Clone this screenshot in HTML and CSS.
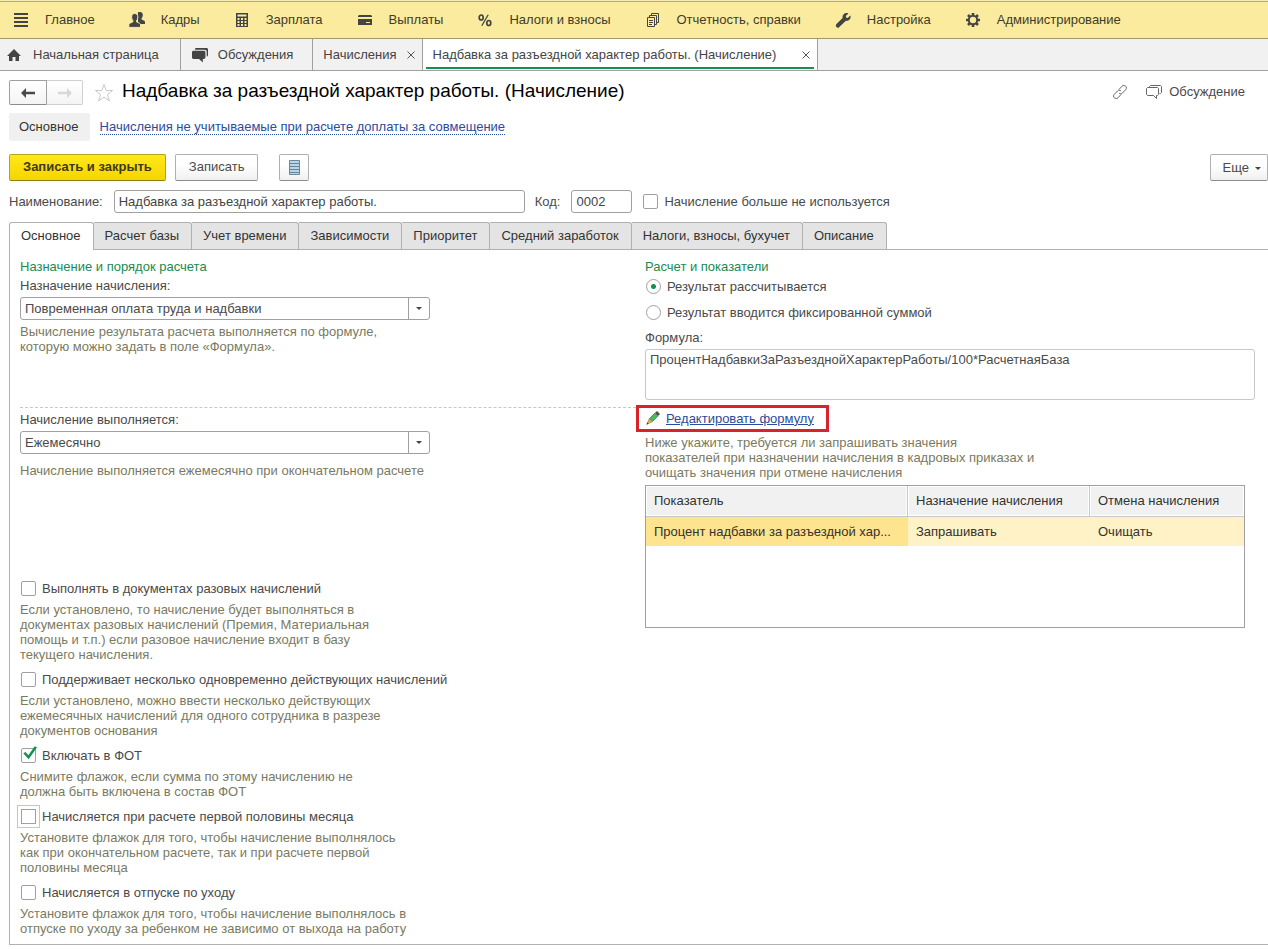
FILE: index.html
```html
<!DOCTYPE html>
<html lang="ru">
<head>
<meta charset="utf-8">
<meta name="viewport" content="width=device-width, initial-scale=1">
<title>Надбавка за разъездной характер работы. (Начисление)</title>
<link rel="stylesheet" href="styles.css">
</head>
<body>
<nav class="sections" aria-label="Разделы">
  <a class="section" href="#"><svg class="icon" viewBox="0 0 16 16"><path d="M1 1h14v2H1zM1 5h14v2H1zM1 9h14v2H1zM1 13h14v2H1z"/></svg>Главное</a>
  <a class="section" href="#"><svg class="icon" viewBox="0 0 16 16"><path d="M11 0c1.800 0 2.800 1.200 2.800 2.900 0 1.300-.4 2.400-1.200 3.100v1.500l2.600 1.300c.5.200.8.700.8 1.300V12H9V0z"/><path class="front" d="M5.800 1.500c2 0 3.100 1.500 3.100 3.500 0 1.500-.5 2.800-1.400 3.600v1.200l2.900 1.400c.7.300 1.100.8 1.100 1.600V15.400H-.2v-2.600c0-.8.4-1.300 1.100-1.600l3-1.400V8.600C3 7.800 2.600 6.500 2.600 5c0-2 1.200-3.500 3.200-3.500z"/></svg>Кадры</a>
  <a class="section" href="#"><svg class="icon" viewBox="0 0 16 16"><path fill-rule="evenodd" d="M2 1h12v14H2zM3.500 2.500v2h9v-2zM3.500 6v2h2V6zM7 6v2h2V6zM10.500 6v2h2V6zM3.500 9v2h2V9zM7 9v2h2V9zM10.500 9v2h2V9zM3.500 12v2h2v-2zM7 12v2h2v-2zM10.500 12v2h2v-2z"/></svg>Зарплата</a>
  <a class="section" href="#"><svg class="icon" viewBox="0 0 16 16"><path d="M2 3h12l1 1v1H1V4zM1 7h14v6H1zm8 3v1h4v-1z" fill-rule="evenodd"/></svg>Выплаты</a>
  <a class="section" href="#"><svg class="icon" viewBox="0 0 16 16"><g fill="none" stroke="currentColor" stroke-width="1.700"><ellipse cx="4.200" cy="5.500" rx="2" ry="2.500"/><ellipse cx="11.800" cy="11" rx="2" ry="2.500"/><path d="M11.200 2.700L4.800 13.800" stroke-width="1.300"/></g></svg>Налоги и взносы</a>
  <a class="section" href="#"><svg class="icon" viewBox="0 0 16 16"><g fill="none" stroke="currentColor"><path d="M2.500 5.500h7v9h-7zM4.500 5.500v-2h7v9h-2M6.500 3.500v-2h7v9h-2M4 8.500h4M4 10.500h4M4 12.500h3"/></g></svg>Отчетность, справки</a>
  <a class="section" href="#"><svg class="icon" viewBox="0 0 16 16"><path d="M11.500 1c.8 0 1.300.1 1.900.4L10.800 4l.4 1.500 1.500.4 2.600-2.500c.3.700.4 1.200.3 1.900-.2 2.400-2.300 4-4.700 3.500L4.300 14.900a1.900 1.900 0 0 1-2.900.1c-.8-.8-.8-2.100.1-2.900L7.600 6C7 3.300 9 1 11.500 1z"/></svg>Настройка</a>
  <a class="section" href="#"><svg class="icon" viewBox="0 0 16 16"><g fill="none" stroke="currentColor"><circle cx="8" cy="8" r="4.200" stroke-width="2"/><path stroke-width="2.600" d="M8 1v2.500M8 12.500V15M1 8h2.500M12.500 8H15M3 3l1.800 1.800M11.200 11.200L13 13M3 13l1.800-1.800M11.200 4.800L13 3"/></g></svg>Администрирование</a>
</nav>

<nav class="windows" aria-label="Открытые окна">
  <a class="window window-home" href="#"><svg class="icon" viewBox="0 0 16 16"><path d="M8 2l7 7h-2v5H9.500v-4h-3v4H3V9H1z"/></svg>Начальная страница</a>
  <a class="window window-talk" href="#"><svg class="icon icon-talk" viewBox="0 0 18 16"><path d="M5 1h10.500c.9 0 1.500.6 1.500 1.500V8c0 .9-.5 1.500-1.300 1.500V5c0-1.400-.8-2.300-2.200-2.300H4C4 1.600 4.300 1 5 1z"/><path d="M2.500 3.700h10.300c1 0 1.600.6 1.600 1.600v5c0 1-.6 1.600-1.600 1.600h-1v3.500L8 11.900H2.500c-1 0-1.500-.6-1.500-1.600v-5c0-1 .5-1.600 1.500-1.600z"/></svg>Обсуждения</a>
  <div class="window window-list"><a href="#">Начисления</a><button class="close" type="button" aria-label="Закрыть"><svg viewBox="0 0 8 8"><path d="M0.500 0.500l7 7M7.500 0.500l-7 7"/></svg></button></div>
  <div class="window window-active"><a href="#">Надбавка за разъездной характер работы. (Начисление)</a><button class="close" type="button" aria-label="Закрыть"><svg viewBox="0 0 8 8"><path d="M0.500 0.500l7 7M7.500 0.500l-7 7"/></svg></button></div>
</nav>

<main class="form">
  <header class="title-row">
    <div class="history">
      <button type="button" aria-label="Назад"><svg viewBox="0 0 14 10"><path d="M0 5l5-5v3.800h9v2.400H5V10z"/></svg></button>
      <button type="button" aria-label="Вперед" disabled><svg viewBox="0 0 14 10"><path d="M14 5L9 0v3.800H0v2.400h9V10z"/></svg></button>
    </div>
    <button class="star" type="button" aria-label="Избранное"><svg viewBox="0 0 20 20"><path d="M10 1.500l2.200 6h6.300l-5 4 1.900 6.500-5.400-3.900L4.600 18l1.900-6.500-5-4h6.300z"/></svg></button>
    <h1>Надбавка за разъездной характер работы. (Начисление)</h1>
    <button class="plain link-button" type="button" aria-label="Ссылка"><svg class="line-icon" viewBox="0 0 16 16"><path d="M7 5.500l3-3.300c1-1 2.600-1 3.700 0s1 2.500 0 3.500L10.500 9C9.600 10 8 10 7 9M9 10.500l-3 3.300c-1 1-2.600 1-3.700 0s-1-2.500 0-3.500L5.500 7C6.400 6 8 6 9 7"/></svg></button>
    <button class="plain" type="button"><svg class="line-icon" viewBox="0 0 16 16"><path d="M3.500 3.500v-1l1-1h10l1 1v6l-1 1h-1M1.500 3.500h10l1 1v6l-1 1h-1v3l-3-3h-6l-1-1v-6z"/></svg>Обсуждение</button>
  </header>

  <nav class="subnav" aria-label="Навигация формы">
    <span class="subnav-current">Основное</span>
    <a href="#">Начисления не учитываемые при расчете доплаты за совмещение</a>
  </nav>

  <div class="commands">
    <button class="btn btn-primary" type="button">Записать и закрыть</button>
    <button class="btn" type="button">Записать</button>
    <button class="btn btn-list" type="button" aria-label="Список"><svg viewBox="0 0 11 15"><path class="sheet" d="M.5.500h10v14H.5z"/><path class="rows" d="M1 3.500h9M1 6.500h9M1 9.500h9M1 12.500h9"/></svg></button>
    <button class="btn btn-more" type="button">Еще<span class="caret"></span></button>
  </div>

  <div class="fields">
    <label for="name">Наименование:</label>
    <input class="text name" id="name" type="text" value="Надбавка за разъездной характер работы.">
    <label class="code-label" for="code">Код:</label>
    <input class="text code" id="code" type="text" value="0002">
    <label class="check"><input type="checkbox">Начисление больше не используется</label>
  </div>

  <div class="tabs" role="tablist">
    <button class="tab tab-active" type="button" role="tab" aria-selected="true">Основное</button>
    <button class="tab" type="button" role="tab">Расчет базы</button>
    <button class="tab" type="button" role="tab">Учет времени</button>
    <button class="tab" type="button" role="tab">Зависимости</button>
    <button class="tab" type="button" role="tab">Приоритет</button>
    <button class="tab" type="button" role="tab">Средний заработок</button>
    <button class="tab" type="button" role="tab">Налоги, взносы, бухучет</button>
    <button class="tab" type="button" role="tab">Описание</button>
  </div>

  <div class="panel" role="tabpanel">
    <section class="left">
      <div class="purpose">
        <h2>Назначение и порядок расчета</h2>
        <label for="purpose">Назначение начисления:</label>
        <div class="select"><select id="purpose"><option>Повременная оплата труда и надбавки</option></select></div>
        <p class="hint">Вычисление результата расчета выполняется по формуле,<br>которую можно задать в поле «Формула».</p>
      </div>
      <div class="schedule">
        <label for="period">Начисление выполняется:</label>
        <div class="select"><select id="period"><option>Ежемесячно</option></select></div>
        <p class="hint">Начисление выполняется ежемесячно при окончательном расчете</p>
      </div>
      <div class="options">
        <div class="option">
          <label class="check"><input type="checkbox">Выполнять в документах разовых начислений</label>
          <p class="hint">Если установлено, то начисление будет выполняться в<br>документах разовых начислений (Премия, Материальная<br>помощь и т.п.) если разовое начисление входит в базу<br>текущего начисления.</p>
        </div>
        <div class="option">
          <label class="check"><input type="checkbox">Поддерживает несколько одновременно действующих начислений</label>
          <p class="hint">Если установлено, можно ввести несколько действующих<br>ежемесячных начислений для одного сотрудника в разрезе<br>документов основания</p>
        </div>
        <div class="option">
          <label class="check"><input type="checkbox" checked>Включать в ФОТ</label>
          <p class="hint">Снимите флажок, если сумма по этому начислению не<br>должна быть включена в состав ФОТ</p>
        </div>
        <div class="option">
          <label class="check"><input class="focused" type="checkbox">Начисляется при расчете первой половины месяца</label>
          <p class="hint">Установите флажок для того, чтобы начисление выполнялось<br>как при окончательном расчете, так и при расчете первой<br>половины месяца</p>
        </div>
        <div class="option">
          <label class="check"><input type="checkbox">Начисляется в отпуске по уходу</label>
          <p class="hint">Установите флажок для того, чтобы начисление выполнялось в<br>отпуске по уходу за ребенком не зависимо от выхода на работу</p>
        </div>
      </div>
    </section>

    <section class="right">
      <h2>Расчет и показатели</h2>
      <div class="radios">
        <label class="radio"><input type="radio" name="result" checked>Результат рассчитывается</label>
        <label class="radio"><input type="radio" name="result">Результат вводится фиксированной суммой</label>
      </div>
      <label for="formula">Формула:</label>
      <textarea id="formula" readonly>ПроцентНадбавкиЗаРазъезднойХарактерРаботы/100*РасчетнаяБаза</textarea>
      <div class="edit"><svg viewBox="0 0 14 14"><path fill="#4b4f54" d="M9 2L11 0l3 3-2 2z"/><path fill="#4cb860" stroke="#397a45" stroke-width=".7" d="M3.500 7.500L9 2l3 3-5.500 5.500z"/><path fill="#e2b15e" stroke="#8b6d3a" stroke-width=".6" d="M3.300 7.700l3 3L.8 13.300z"/><path fill="#333" d="M1.500 11.600l1.100 1.100-2.100.9z"/></svg><a href="#">Редактировать формулу</a></div>
      <p class="hint">Ниже укажите, требуется ли запрашивать значения<br>показателей при назначении начисления в кадровых приказах и<br>очищать значения при отмене начисления</p>
      <div class="grid">
        <table>
          <colgroup><col class="col-name"><col class="col-set"><col></colgroup>
          <thead><tr><th>Показатель</th><th>Назначение начисления</th><th>Отмена начисления</th></tr></thead>
          <tbody><tr><td class="cell-current">Процент надбавки за разъездной хар...</td><td>Запрашивать</td><td>Очищать</td></tr></tbody>
        </table>
      </div>
    </section>
  </div>
</main>
</body>
</html>
```
FILE: styles.css
```css
* { box-sizing: border-box; }

body {
  margin: 0;
  background: #fff;
  color: #4a4a4a;
  font: 13px/15px "Liberation Sans", Arial, sans-serif;
}

button, input, select, textarea { font: inherit; color: inherit; margin: 0; }
h1, h2, p { margin: 0; font-weight: normal; font-size: inherit; }
svg { display: block; flex: none; fill: currentColor; }

/* Section bar */
.sections {
  display: flex;
  gap: 34px;
  height: 39px;
  margin: 0;
  padding: 0 13px;
  background: #faeb9e;
  border-top: 1px solid #f6ecb4;
  border-bottom: 1px solid #a3986a;
  box-shadow: inset 0 1px #b5a96c;
}
.section {
  display: flex;
  align-items: center;
  gap: 16px;
  color: #3f3c2c;
  text-decoration: none;
  white-space: nowrap;
}
.icon { width: 16px; height: 16px; color: #444; }
.icon-talk { width: 18px; }
.front { stroke: #faeb9e; stroke-width: 1; }

/* Open windows */
.windows {
  display: flex;
  height: 32px;
  background: #f1f1f1;
  border-bottom: 1px solid #a0a0a0;
}
.window {
  display: flex;
  align-items: center;
  gap: 9px;
  padding: 0 7px 0 10px;
  border-right: 1px solid #a0a0a0;
  color: #444;
  white-space: nowrap;
  text-decoration: none;
}
.window a { color: inherit; text-decoration: none; }
.window-home { gap: 11px; padding: 0 21px 0 6px; }
.window-talk { gap: 9px; padding-right: 19px; }
.window-list { gap: 10px; }
.window-active {
  gap: 26px;
  background: linear-gradient(#149350, #149350) 3px 28px / calc(100% - 6px) 2px no-repeat #fff;
}
.close { display: flex; padding: 0; border: 0; background: none; }
.close svg { width: 8px; height: 8px; fill: none; stroke: #555; }

/* Title */
.form { padding: 9px 0 4px 9px; }
.title-row { display: flex; align-items: center; height: 25px; padding-right: 23px; }
.history { display: flex; }
.history button {
  display: flex;
  align-items: center;
  justify-content: center;
  width: 38px;
  height: 25px;
  padding: 0;
  border: 1px solid #a0a0a0;
  border-bottom-color: #8c8c8c;
  border-radius: 2px 0 0 2px;
  background: linear-gradient(#fff, #f4f4f4);
}
.history button:disabled { width: 36px; border-color: #d0d0d0; border-left: 0; border-radius: 0 2px 2px 0; color: #d8d8d8; }
.history svg { width: 14px; height: 10px; }
.star { margin-left: 11px; padding: 0; border: 0; background: none; }
.star svg { width: 20px; height: 20px; fill: none; stroke: #c8c8c8; }
h1 { flex: 1; margin-left: 8px; padding-bottom: 3px; color: #000; font-size: 19px; line-height: 22px; white-space: nowrap; }
.plain { display: flex; align-items: center; gap: 7px; padding: 0 0 2px; border: 0; background: none; }
.link-button { margin-right: 18px; }
.line-icon { width: 16px; height: 16px; fill: none; stroke: #666; }

.subnav { display: flex; align-items: center; gap: 10px; height: 28px; margin-top: 8px; }
.subnav-current { padding: 6px 11px 7px 10px; background: #f0f0f0; border-radius: 2px; color: #333; }
.subnav a { color: #2b4c9b; text-decoration: none; border-bottom: 1px dotted #2b4c9b; }

/* Commands */
.commands { display: flex; gap: 9px; margin-top: 13px; }
.btn {
  height: 27px;
  padding: 0 13px 2px;
  border: 1px solid #b0b0b0;
  border-bottom-color: #8c8c8c;
  border-radius: 2px;
  background: linear-gradient(#fff 40%, #f0f0f0);
  white-space: nowrap;
}
.btn-primary {
  border-color: #b8a020;
  border-bottom-color: #90801c;
  background: linear-gradient(#ffe81a, #f6d500);
  color: #3f3a14;
  font-weight: bold;
}
.btn-list { display: flex; align-items: center; justify-content: center; width: 30px; margin-left: 12px; padding: 0; }
.btn-list svg { width: 11px; height: 15px; }
.sheet { fill: #b9d4e6; stroke: #6c8698; }
.rows { stroke: #64859c; }
.btn-more { display: flex; align-items: center; gap: 6px; margin-left: auto; padding: 0 6px 1px 12px; }
.caret { border: 3px solid transparent; border-top-color: #444; border-bottom: 0; margin-top: 3px; }

/* Header fields */
.fields { display: flex; align-items: center; margin-top: 9px; }
.text { height: 23px; padding: 0 4px; border: 1px solid #a0a0a0; border-radius: 3px; background: #fff; color: #444; }
.name { width: 411px; margin: 0 10px 0 11px; }
.code { width: 61px; margin: 0 11px 0 11px; }

.check, .radio { display: flex; align-items: center; gap: 6px; white-space: nowrap; }
.check input, .radio input {
  appearance: none;
  width: 15px;
  height: 15px;
  border: 1px solid #a0a0a0;
  border-radius: 2px;
  background: #fff;
}
.check input:checked { position: relative; }
.check input:checked::after {
  content: "";
  position: absolute;
  left: 1px;
  top: -3px;
  width: 14px;
  height: 14px;
  background: #129150;
  clip-path: polygon(2% 52%, 18% 42%, 38% 66%, 84% 2%, 100% 10%, 40% 94%);
}
.check .focused { border-radius: 0; outline: 1px solid #e3cf4b; outline-offset: 3px; }
.radio { gap: 7px; }
.radio input { border-radius: 50%; }
.radio input:checked { background: radial-gradient(circle, #129150 2px, #fff 3px); }

/* Page tabs */
.tabs { display: flex; margin-top: 9px; }
.tab {
  height: 27px;
  padding: 0 12px 1px 11px;
  border: 1px solid #b0b0b0;
  border-width: 1px 1px 0 0;
  border-radius: 0 3px 0 0;
  background: #e4e4e4;
  color: #333;
  white-space: nowrap;
}
.tab-active { height: 28px; margin-bottom: -1px; padding-bottom: 2px; border-left-width: 1px; border-radius: 3px 3px 0 0; background: #fff; z-index: 1; }

.panel {
  display: grid;
  grid-template-columns: 616px minmax(0, 1fr);
  gap: 9px;
  padding: 9px 13px 8px 10px;
  border: 1px solid #b0b0b0;
  border-right: 0;
}
h2 { color: #1a8a4e; }
.hint { color: #7a7a62; white-space: nowrap; }
.purpose, .schedule { display: flex; flex-direction: column; gap: 4px; }
.purpose { height: 148px; }
.schedule { height: 174px; padding-top: 4px; border-top: 1px dashed #c8c8c8; }
.schedule .hint { margin-top: 5px; }
.select { position: relative; width: 410px; }
.select select {
  display: block;
  appearance: none;
  width: 100%;
  height: 23px;
  padding: 0 26px 0 4px;
  border: 1px solid #a0a0a0;
  border-radius: 3px;
  background: linear-gradient(#a0a0a0, #a0a0a0) right 20px top / 1px 100% no-repeat #fff;
}
.select::after {
  content: "";
  position: absolute;
  right: 8px;
  top: 10px;
  border: 3px solid transparent;
  border-top-color: #444;
  border-bottom: 0;
}
.options { display: flex; flex-direction: column; gap: 10px; }
.option { display: flex; flex-direction: column; align-items: flex-start; gap: 6px; }
.left .check { height: 15px; padding-left: 1px; }

.right { display: flex; flex-direction: column; align-items: flex-start; }
.radios { display: flex; flex-direction: column; gap: 11px; margin: 5px 0 10px; }
.radio input { margin-left: 1px; }
.radio { gap: 6px; }
textarea {
  display: block;
  width: 100%;
  height: 51px;
  margin-top: 4px;
  padding: 2px 4px;
  border: 1px solid #c8c8c8;
  border-radius: 3px;
  resize: none;
}
.edit {
  display: flex;
  align-items: center;
  gap: 6px;
  height: 27px;
  margin: 5px 0 3px -9px;
  padding: 0 12px 1px 7px;
  border: 3px solid #d8232a;
}
.edit svg { width: 14px; height: 14px; }
.edit a { color: #2b4c9b; }

.grid { width: 100%; max-width: 600px; height: 143px; margin-top: 5px; border: 1px solid #a0a0a0; }
table { width: 100%; table-layout: fixed; border-collapse: separate; border-spacing: 0; color: #333; }
.col-name { width: 262px; }
.col-set { width: 182px; }
th, td { padding: 0 8px; overflow: hidden; font-weight: normal; text-align: left; text-overflow: ellipsis; white-space: nowrap; }
th { height: 31px; padding-bottom: 1px; background: #f1f1f1; border-right: 1px solid #c8c8c8; border-bottom: 1px solid #c8c8c8; box-shadow: inset 0 0 0 1px #fff; }
th:last-child { border-right: 0; }
td { height: 29px; background: #fef2c6; }
.cell-current { background: #fee48e; }
```
